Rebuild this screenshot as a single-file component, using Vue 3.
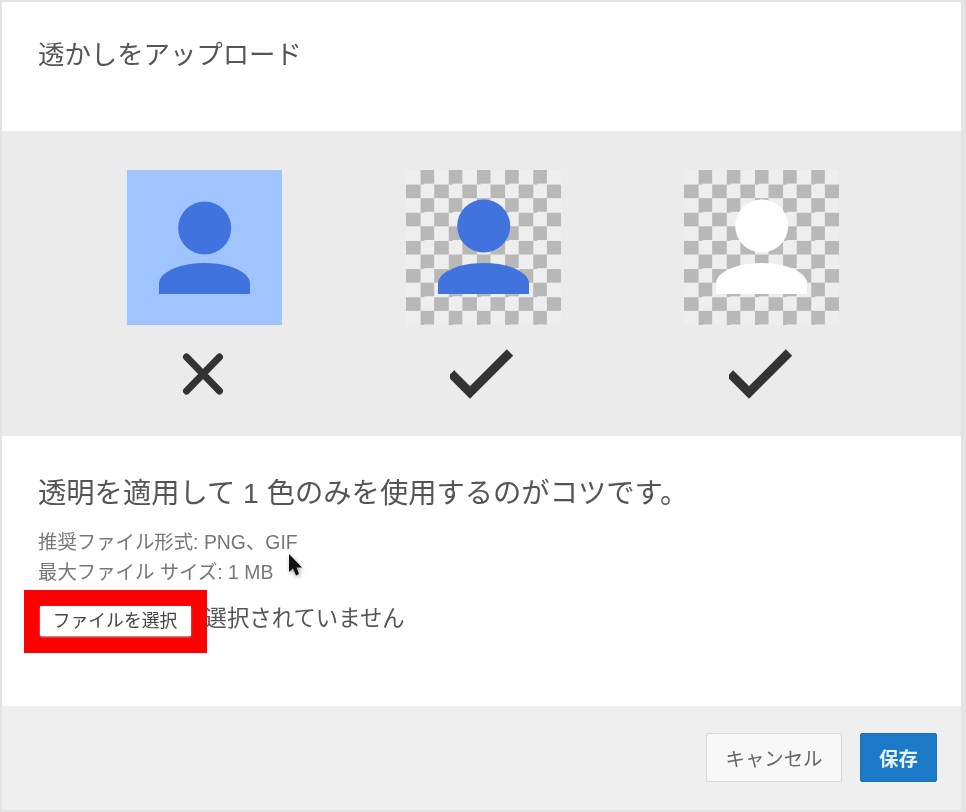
<script setup>
const samples = [
  { id: 'solid', kind: 'solid', mark: 'cross', fill: '#4173df', cy: 58 },
  { id: 'blue', kind: 'check', mark: 'tick', fill: '#4173df', cy: 56 },
  { id: 'white', kind: 'check', mark: 'tick', fill: '#ffffff', cy: 56 }
]
</script>

<template>
  <div class="frame">
    <div class="dialog">
      <header class="head">透かしをアップロード</header>
      <section class="band">
        <div v-for="s in samples" :key="s.id" class="sample">
          <div class="thumb" :class="s.kind">
            <svg viewBox="0 0 155 155" width="155" height="155">
              <circle cx="77.7" :cy="s.cy" r="26.5" :fill="s.fill" />
              <path d="M32 124V113C32 110 34 107 36 105C45 97 60 93 77.500 93C95 93 110 97 119 105C121 107 123 110 123 113V124Z" :fill="s.fill" />
            </svg>
          </div>
          <svg v-if="s.mark === 'cross'" class="mark" viewBox="0 0 66 54" width="66" height="54">
            <path d="M14.500 10L47.500 44M47.500 10L14.500 44" stroke="#333" stroke-width="7" stroke-linecap="round" fill="none" />
          </svg>
          <svg v-else class="mark" viewBox="0 0 66 54" width="66" height="54">
            <path d="M1 26.500L20 45.500L60 5.500" stroke="#333" stroke-width="9" fill="none" />
          </svg>
        </div>
      </section>
      <section class="body">
        <h2 class="tip">透明を適用して 1 色のみを使用するのがコツです。</h2>
        <p class="info">推奨ファイル形式: PNG、GIF</p>
        <p class="info">最大ファイル サイズ: 1 MB</p>
        <div class="file-row">
          <div class="highlight"><button class="pick">ファイルを選択</button></div>
          <span class="none">選択されていません</span>
        </div>
        <svg class="cursor" viewBox="0 0 18 30" width="18" height="30">
          <path d="M1 1V19L5 15.500L8 22.500L11 21L8.500 14.500H14Z" fill="#111" />
        </svg>
      </section>
      <footer class="foot">
        <button class="btn cancel">キャンセル</button>
        <button class="btn save">保存</button>
      </footer>
    </div>
  </div>
</template>

<style scoped>
.frame {
  width: 966px;
  height: 812px;
  box-sizing: border-box;
  padding: 2px 5px 2px 2px;
  background: #e4e4e4;
  font-family: "Liberation Sans", "Noto Sans CJK JP", sans-serif;
  overflow: hidden;
}
.dialog {
  height: 100%;
  display: flex;
  flex-direction: column;
  background: #fff;
  filter: blur(0.5px);
}
.head {
  height: 129px;
  box-sizing: border-box;
  padding: 33px 0 0 36px;
  font-size: 26.400px;
  line-height: 40px;
  color: #555;
}
.band {
  height: 305px;
  box-sizing: border-box;
  padding: 39px 0 0 3px;
  background: #ebebeb;
  display: flex;
  justify-content: center;
  gap: 123.5px;
}
.sample {
  width: 155px;
  display: flex;
  flex-direction: column;
  align-items: center;
}
.thumb {
  width: 155px;
  height: 155px;
}
.thumb svg {
  display: block;
}
.solid {
  background: #a0c4ff;
}
.check {
  background-color: #eeeeee;
  background-image: conic-gradient(#b8b8b8 25%, transparent 0 50%, #b8b8b8 0 75%, transparent 0);
  background-size: 28.18px 28.18px;
}
.mark {
  margin-top: 22px;
}
.body {
  position: relative;
  height: 270px;
  box-sizing: border-box;
  padding: 37px 0 0 36px;
  color: #666;
}
.tip {
  margin: 0 0 14px;
  font-size: 28.300px;
  line-height: 40px;
  font-weight: 400;
  color: #555;
}
.info {
  margin: 0;
  font-size: 19.400px;
  line-height: 30px;
  color: #777;
}
.file-row {
  display: flex;
  align-items: flex-start;
  margin: 3px 0 0 -14.500px;
}
.highlight {
  border-style: solid;
  border-color: #f00;
  border-width: 16px 16.500px 17px;
  display: flex;
}
.pick {
  width: 151px;
  height: 30px;
  padding: 0;
  border: 0;
  border-radius: 2px;
  background: #fff;
  box-shadow: 0 1px 2px #bbb;
  font: inherit;
  font-size: 17.800px;
  line-height: 28px;
  color: #444;
}
.none {
  margin: 13px 0 0 -2px;
  font-size: 22.400px;
  line-height: 32px;
  color: #555;
}
.cursor {
  position: absolute;
  left: 286px;
  top: 117px;
  filter: drop-shadow(1px 2px 2px rgba(0, 0, 0, 0.35));
}
.foot {
  flex: 1;
  background: #efefef;
  display: flex;
  justify-content: flex-end;
  align-items: flex-start;
  gap: 18px;
  padding: 27px 24px 0 0;
}
.btn {
  height: 49px;
  padding: 0;
  border-radius: 2px;
  font: inherit;
  font-size: 19.400px;
}
.cancel {
  width: 136px;
  border: 1px solid #d8d8d8;
  background: #f8f8f8;
  color: #666;
}
.save {
  width: 77px;
  border: 1px solid #1672bd;
  background: #1b79c8;
  color: #e8f2fb;
  font-weight: 700;
}
</style>
